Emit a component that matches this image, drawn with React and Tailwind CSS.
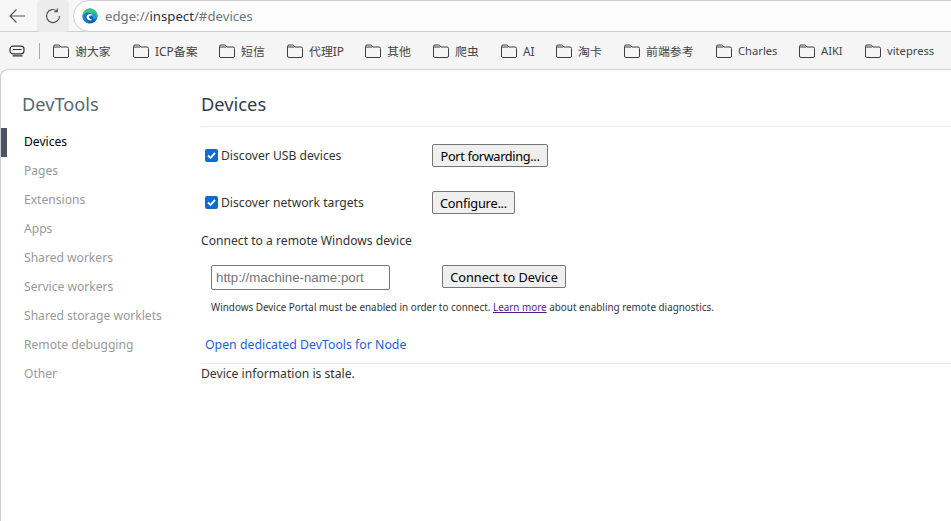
const FONT = "font-['Noto_Sans','Noto_Sans_CJK_SC',sans-serif]";

const bookmarks = [
  { label: "谢大家", w: 80 },
  { label: "ICP备案", w: 86 },
  { label: "短信", w: 68 },
  { label: "代理IP", w: 78 },
  { label: "其他", w: 68 },
  { label: "爬虫", w: 68 },
  { label: "AI", w: 55 },
  { label: "淘卡", w: 68 },
  { label: "前端参考", w: 92 },
  { label: "Charles", w: 83, latin: true },
  { label: "AIKI", w: 66, latin: true },
  { label: "vitepress", w: 86, latin: true },
];

const navItems = ["Devices", "Pages", "Extensions", "Apps", "Shared workers", "Service workers", "Shared storage worklets", "Remote debugging", "Other"];

const FolderIcon = () => (
  <svg width="16" height="16" viewBox="0 0 16 16" fill="none" stroke="#3f3f3f" strokeWidth="1" className="shrink-0">
    <path d="M0.5 4V13A1.5 1.5 0 0 0 2 14.5H14A1.5 1.5 0 0 0 15.5 13V5.5A1.5 1.5 0 0 0 14 4H8L6.5 2.3A1 1 0 0 0 5.8 2H2A1.5 1.5 0 0 0 0.5 3.5V4H7" />
  </svg>
);

const EdgeLogo = () => (
  <svg width="16" height="16" viewBox="0 0 16 16" className="shrink-0">
    <circle cx="8" cy="8" r="7.5" fill="#0f5fb5" />
    <path d="M0.5 8A7.5 7.5 0 0 1 15.5 8C15.5 10.2 13.4 11 11.6 10.7L10.4 8C10 5.6 8 4.6 6 4.8C3.6 5 1.6 6.4 0.5 8Z" fill="#3cc47c" />
    <path d="M15.5 7.6C15.5 10.2 13.4 11 11.6 10.7L10.4 8C10.6 7 10.2 6 9.6 5.2C11.6 4.6 14.2 5 15.5 7.6Z" fill="#1c9fe2" />
    <path d="M0.5 8.2C1.6 6.4 3.6 5.2 5.6 5.4C3.8 6.4 3 8.2 3.4 10.2C3.8 12.4 5.4 14.4 7.6 15.4C3.6 15.2 0.5 12.2 0.5 8.2Z" fill="#1b84d8" />
    <path d="M4.6 9.2C4.6 7.2 6.2 6 8 6C9.2 6 10 6.5 10.5 7.3L8.8 7.6C7.6 7.5 6.9 8.4 7.2 9.6C7.6 11 9.2 11.8 10.6 11.6C9.4 12.6 7.6 12.7 6.4 12C5.2 11.3 4.6 10.3 4.6 9.2Z" fill="#ffffff" />
  </svg>
);

const Check = ({ children }) => (
  <label className="flex items-center text-[12.15px] text-[#333]">
    <span className="mr-[3px] flex h-[13px] w-[13px] items-center justify-center rounded-[2px] bg-[#0f6cce]">
      <svg width="11" height="11" viewBox="0 0 11 11" fill="none" stroke="#fff" strokeWidth="1.8">
        <path d="M2 5.5L4.5 8L9 2.8" />
      </svg>
    </span>
    {children}
  </label>
);

const Btn = ({ children, className }) => (
  <button className={`flex h-[23px] items-center justify-center rounded-[2px] border border-[#767676] bg-[#efefef] pt-[2px] text-[12.75px] text-black ${className}`}>
    {children}
  </button>
);

export default function App() {
  return (
    <div className={`flex h-[521px] w-[951px] flex-col overflow-hidden bg-[#f7f7f7] ${FONT}`}>
      <div className="flex h-[32px] items-center border-b border-[#d0d0d0] bg-[#f7f7f7]">
        <div className="flex h-[32px] w-[37px] items-center justify-start pl-[9px]">
          <svg width="16" height="14" viewBox="0 0 16 14" fill="none" stroke="#555" strokeWidth="1.2">
            <path d="M16 7H1M7.5 .5L1 7L7.5 13.5" />
          </svg>
        </div>
        <div className="flex h-[32px] w-[32px] items-center justify-center rounded-[4px] bg-[#ececec]">
          <svg width="16" height="16" viewBox="0 0 16 16" fill="none" stroke="#555" strokeWidth="1.2">
            <path d="M14.5 8A6.5 6.5 0 1 1 12 2.9M12.3 .6V3.6H9.3" />
          </svg>
        </div>
        <div className="ml-[4px] -mr-4 flex h-[32px] flex-1 items-center rounded-full border border-[#d0d0d0] bg-[#fdfdfd] pl-[8px]">
          <EdgeLogo />
          <span className="ml-[7px] pt-[2px] text-[13.2px] text-[#6b7683]">
            edge://<span className="text-[#27323d]">inspect</span>/#devices
          </span>
        </div>
      </div>
      <div className="flex h-[37px] items-center bg-[#f5f5f5]">
        <div className="flex w-[53px] shrink-0 items-center pl-[9px]">
          <svg width="17" height="12" viewBox="0 0 17 12" fill="none" stroke="#333" strokeWidth="1.2">
            <rect x="1" y="1.2" width="14" height="7.6" rx="3" />
            <path d="M4 4.5H12.5M3.5 10.8H13.5" />
          </svg>
          <span className="ml-[13px] h-[16px] w-px bg-[#aaaaaa]" />
        </div>
        {bookmarks.map((b) => (
          <div key={b.label} className={`flex shrink-0 items-center gap-[6px] pt-[1px] text-[#444] ${b.latin ? "text-[11.2px]" : "text-[11.9px]"}`} style={{ width: b.w }}>
            <FolderIcon />
            <span className="pt-[1px]">{b.label}</span>
          </div>
        ))}
      </div>
      <div className="flex min-h-0 flex-1 rounded-tl-[8px] border-t border-l border-[#cfcfcf] bg-white">
        <aside className="w-[200px] shrink-0">
          <div className="pt-[19px] pl-[21px] text-[18.2px] leading-[30px] text-[#5a6472]">DevTools</div>
          <ul className="mt-[7px] pt-[2px]">
            {navItems.map((item, i) => (
              <li key={item} className={`flex h-[29px] items-center pl-[17px] text-[12.1px] ${i === 0 ? "border-l-[6px] border-[#4a5561] text-black" : "border-l-[6px] border-transparent text-[#999]"}`}>
                {item}
              </li>
            ))}
          </ul>
        </aside>
        <main className="min-w-0 flex-1 pt-[19px]">
          <h1 className="h-[38px] border-b border-[#eaeaea] text-[18.3px] leading-[30px] text-[#333c47]">Devices</h1>
          <div className="mt-[17px] flex h-[24px] items-start pl-[4px]">
            <div className="flex h-[24px] w-[227px] items-center"><Check>Discover USB devices</Check></div>
            <Btn className="w-[116px] tracking-[-0.35px]">Port forwarding...</Btn>
          </div>
          <div className="mt-[23px] flex h-[24px] items-start pl-[4px]">
            <div className="flex h-[24px] w-[227px] items-center"><Check>Discover network targets</Check></div>
            <Btn className="w-[83px] tracking-[-0.2px]">Configure...</Btn>
          </div>
          <p className="mt-[17px] text-[12.15px] leading-[18px] text-[#333]">Connect to a remote Windows device</p>
          <div className="mt-[15px] flex items-start pl-[10px]">
            <input readOnly placeholder="http://machine-name:port" className="h-[25px] w-[179px] rounded-[2px] border border-[#767676] bg-white px-[4px] font-['Liberation_Sans',sans-serif] text-[13.3px] placeholder:text-[#757575]" />
            <Btn className="ml-[52px] w-[124px]">Connect to Device</Btn>
          </div>
          <p className="mt-[9px] pl-[10px] text-[9.9px] leading-[16px] text-[#333]">
            Windows Device Portal must be enabled in order to connect. <span className="text-[#551a8b] underline">Learn more</span> about enabling remote diagnostics.
          </p>
          <div className="mt-[21px] pl-[4px] text-[12.3px] leading-[18px] text-[#1a5fd8]">Open dedicated DevTools for Node</div>
          <div className="mt-[9px] border-t border-[#eaeaea] pt-[1px] text-[12.15px] leading-[18px] text-[#333]">Device information is stale.</div>
        </main>
      </div>
    </div>
  );
}
